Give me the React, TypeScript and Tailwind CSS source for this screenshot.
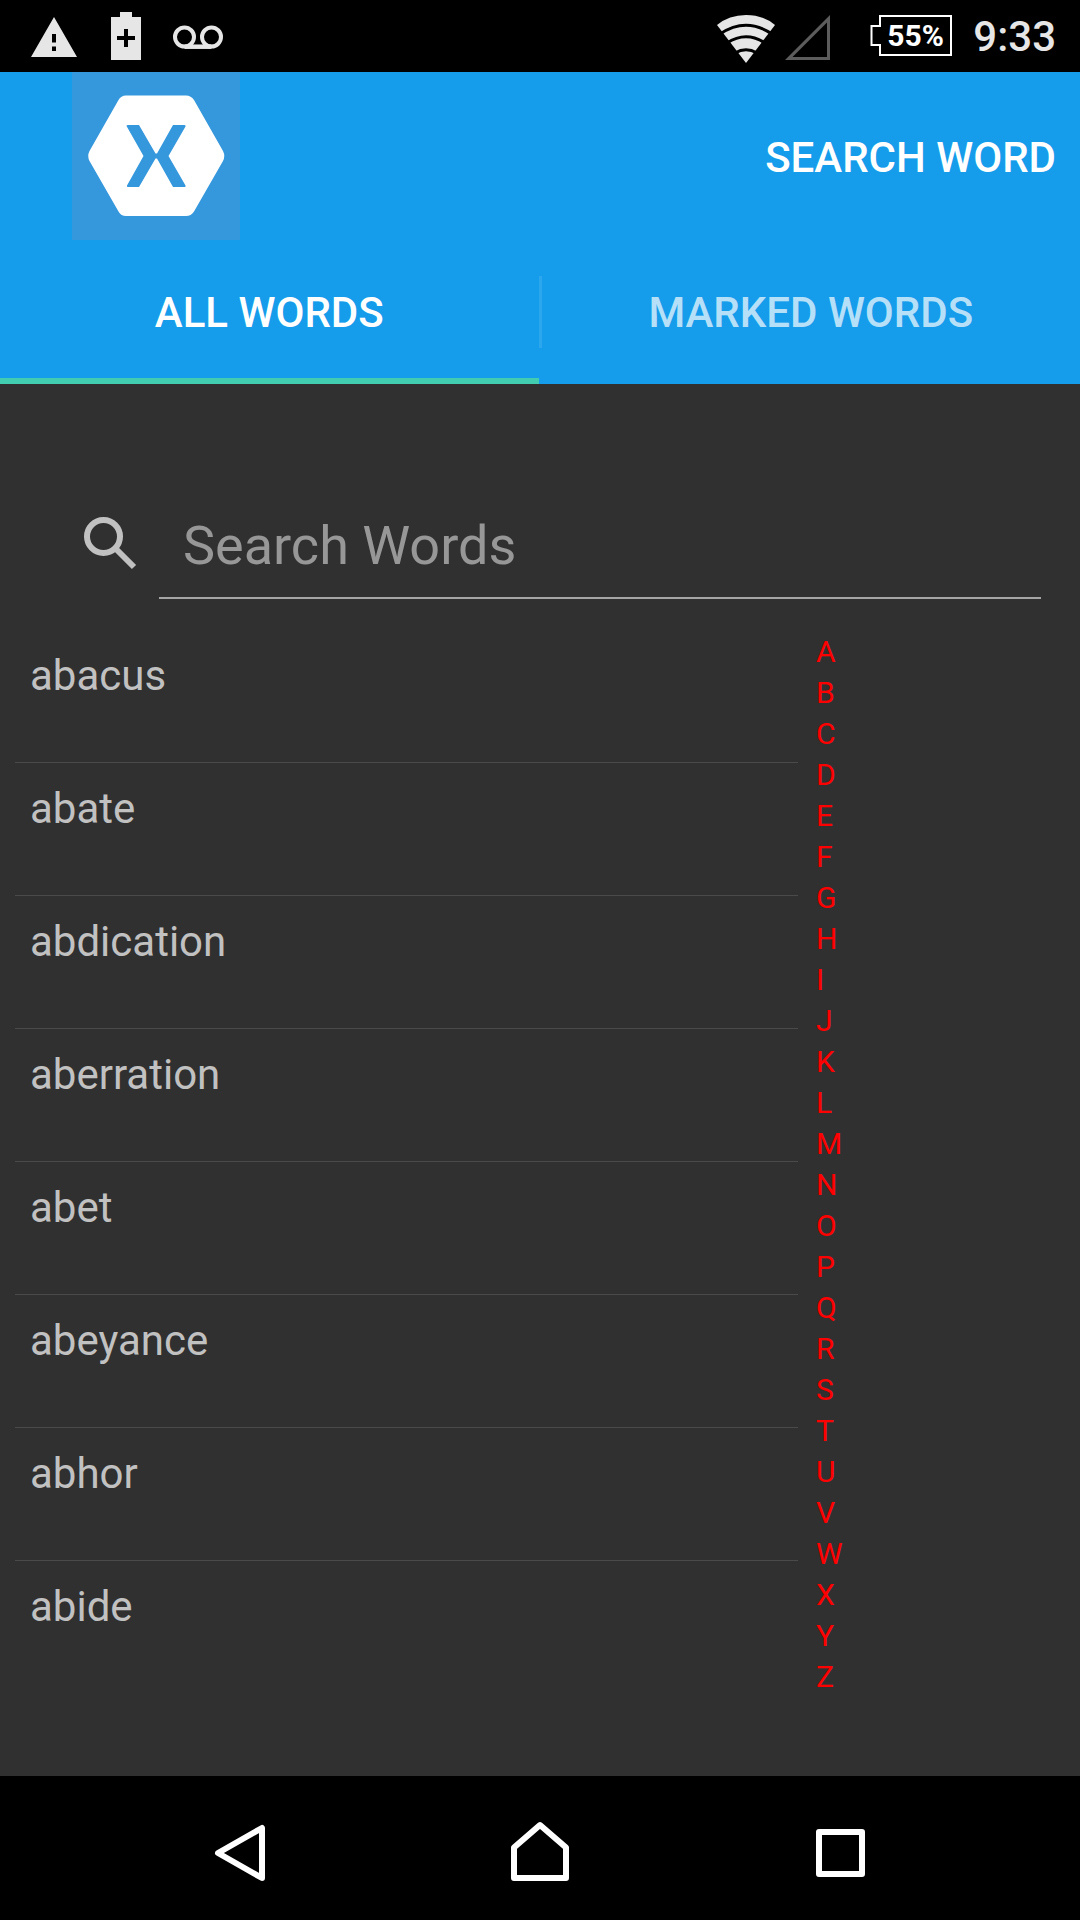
import { useState } from "react";

const words = ["abacus", "abate", "abdication", "aberration", "abet", "abeyance", "abhor", "abide"];
const letters = "ABCDEFGHIJKLMNOPQRSTUVWXYZ".split("");

function StatusBar() {
  return (
    <div className="flex h-[72px] items-center justify-between bg-black pr-6 pl-[31px]">
      <div className="flex items-center text-[#e6e6e6]">
        <svg width="47" height="72" viewBox="31 0 47 72" aria-hidden="true">
          <path fill="currentColor" fillRule="evenodd" d="M54 17L77 57H31ZM52 34V42.500H56V34ZM52 46.500V51H56V46.500Z" />
        </svg>
        <svg className="ml-[33px]" width="30" height="72" viewBox="111 0 30 72" aria-hidden="true">
          <path fill="currentColor" d="M120 12h12v5h9v43h-30V17h9z" />
          <path stroke="black" strokeWidth="4" d="M117 38h18M126 29v18" />
        </svg>
        <svg className="ml-8" width="50" height="72" viewBox="173 0 50 72" fill="none" stroke="currentColor" aria-hidden="true">
          <circle cx="184.500" cy="37" r="9.500" strokeWidth="4" />
          <circle cx="211.500" cy="37" r="9.500" strokeWidth="4" />
          <path strokeWidth="4.500" d="M184.500 46.700H211.500" />
        </svg>
      </div>
      <div className="flex items-center">
        <svg width="58" height="72" viewBox="717 0 58 72" aria-hidden="true">
          <path fill="#e6e6e6" d="M746 63L717 25Q729 15 746 15T775 25Z" />
          <g fill="none" stroke="black" strokeWidth="3">
            <path d="M720 34Q746 16.500 772 34M727 43Q746 30.500 765 43M735 53Q746 46.500 757 53" />
          </g>
        </svg>
        <svg className="ml-[10px]" width="46" height="72" viewBox="785 0 46 72" aria-hidden="true">
          <path fill="#5c5c5c" fillRule="evenodd" d="M830 15V60H785ZM827 22.500L792.500 57H827Z" />
        </svg>
        <div className="relative ml-[39px] flex h-[72px] w-[82px] items-center pl-[17px]">
          <svg className="absolute inset-0" width="82" height="72" viewBox="870 0 82 72" fill="none" aria-hidden="true">
            <path stroke="white" strokeWidth="2" d="M880 16H951V55H880V45H871.500V26H880Z" />
          </svg>
          <span className="text-[30px] leading-9 font-bold text-white">55%</span>
        </div>
        <span className="ml-[21px] pt-0.5 text-[42px] leading-[70px] font-medium text-[#e6e6e6]">9:33</span>
      </div>
    </div>
  );
}

function Logo() {
  return (
    <svg className="ml-[72px]" width="168" height="168" viewBox="0 0 168 168" role="img" aria-label="App logo">
      <rect width="168" height="168" fill="#3598dc" />
      <path
        fill="white"
        d="M54 23.500H114Q119 23.500 122 28L151 79Q153.500 84 151 89L122 139.500Q119 144 114 144H54Q49 144 46.500 139.500L17.500 89Q15 84 17.500 79L46.500 28Q49 23.500 54 23.500Z"
      />
      <path
        fill="#3598dc"
        d="M54.500 54Q54.500 53 56 53H67L83.500 81.500H85L101 53H112.500Q114 53 113.500 54.500L96.500 84L113.500 113.500Q114 115 112.500 115H101L85 86.500H83.500L67 115H56Q54.500 115 55 113.500L71.500 84Z"
      />
    </svg>
  );
}

export default function App() {
  const [query, setQuery] = useState("");
  const tab = "flex-1 text-[42px] leading-[50px] font-medium border-b-[6px] pt-2 text-center";
  return (
    <div className="flex min-h-screen flex-col bg-[#303030] font-['Roboto',sans-serif]">
      <StatusBar />
      <header className="bg-[#159ceb] text-white">
        <div className="flex items-center justify-between pr-6">
          <Logo />
          <button className="pt-1 text-[42px] leading-[50px] font-medium">SEARCH WORD</button>
        </div>
        <div className="flex h-36" role="tablist">
          <button role="tab" aria-selected="true" className={`${tab} border-[#43cdb0]`}>
            ALL WORDS
          </button>
          <div className="mt-9 h-[72px] w-[3px] bg-white/10" />
          <button role="tab" aria-selected="false" className={`${tab} border-transparent text-white/70`}>
            MARKED WORDS
          </button>
        </div>
      </header>
      <main className="flex-1">
        <label className="mt-[108px] mr-[39px] ml-[83px] flex items-start">
          <svg className="mt-6" width="54" height="54" viewBox="83 516 54 54" fill="none" stroke="#c1c1c1" strokeWidth="6">
            <title>Search</title>
            <circle cx="103.500" cy="536.500" r="16.500" />
            <path d="M116.500 549.500L134 567" />
          </svg>
          <input
            type="text"
            aria-label="Search Words"
            placeholder="Search Words"
            value={query}
            onChange={(e) => setQuery(e.target.value)}
            className="ml-[22px] h-[107px] min-w-0 flex-1 border-b-2 border-[#a5a5a5] bg-transparent pt-0.5 pl-6 text-[54px] text-[#c1c1c1] outline-none placeholder:text-[#979797]"
          />
        </label>
        <div className="mt-[31px] flex items-start gap-[18px] px-[15px]">
          <ul className="min-w-0 flex-1">
            {words.map((word) => (
              <li key={word} className="h-[133px] border-b border-[#4a4a4a] pt-[21px] pl-[15px] text-[42px] leading-[50px] text-[#c1c1c1] last:border-b-0">
                {word}
              </li>
            ))}
          </ul>
          <nav aria-label="Alphabet index" className="flex w-[249px] flex-col items-start pt-px">
            {letters.map((letter) => (
              <button key={letter} className="text-[30px] leading-[41px] text-[#ff0000]">
                {letter}
              </button>
            ))}
          </nav>
        </div>
      </main>
      <div className="flex h-36 items-center justify-between bg-black px-[214px]">
        <button aria-label="Back">
          <svg width="52" height="144" viewBox="214 1776 52 144" fill="none" stroke="white" strokeWidth="6" strokeLinejoin="round">
            <path d="M262 1828V1878L218 1853Z" />
          </svg>
        </button>
        <button aria-label="Home">
          <svg width="60" height="144" viewBox="511 1776 60 144" fill="none" stroke="white" strokeWidth="6" strokeLinejoin="round">
            <path d="M514 1847.500L540 1825L566 1847.500V1878H514Z" />
          </svg>
        </button>
        <button aria-label="Recent apps">
          <svg width="51" height="144" viewBox="815 1776 51 144" fill="none" stroke="white" strokeWidth="6" strokeLinejoin="round">
            <path d="M819 1832H862V1874H819Z" />
          </svg>
        </button>
      </div>
    </div>
  );
}
